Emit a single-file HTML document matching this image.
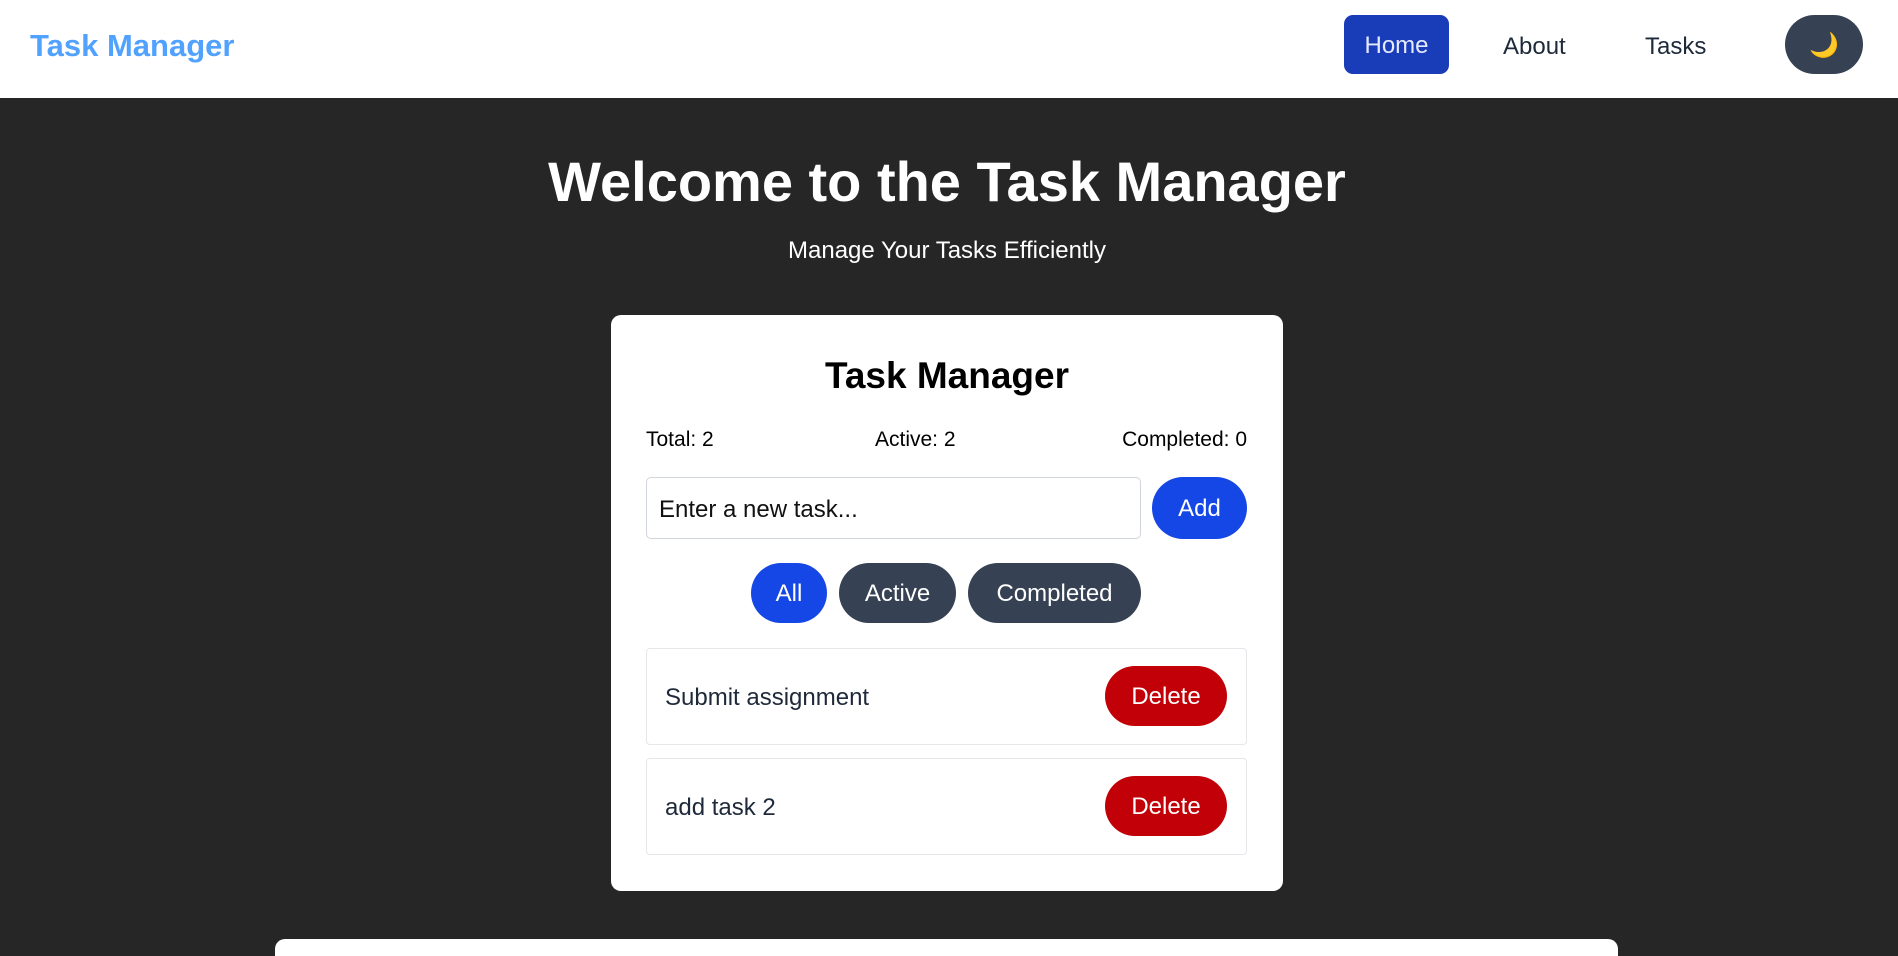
<!DOCTYPE html>
<html><head><meta charset="utf-8"><style>
*{box-sizing:border-box;margin:0;padding:0}
html,body{width:1898px;height:956px;overflow:hidden}
body{background:#262626;font-family:"Liberation Sans","DejaVu Sans",sans-serif;position:relative}
.a{position:absolute}
.nav{left:0;top:0;width:1898px;height:98px;background:#fff}
.btn{display:flex;align-items:center;justify-content:center;color:#fff;font-size:24px;padding-top:2px}
.c{text-align:center}
</style></head><body>
<div class="a nav"></div>
<div class="a" style="left:30px;top:28px;font-size:31px;font-weight:bold;color:#51a2ff">Task Manager</div>
<div class="a btn" style="left:1344px;top:15px;width:105px;height:59px;background:#193cb8;border-radius:9px;color:#e5eaff">Home</div>
<div class="a" style="left:1503px;top:33px;font-size:24px;color:#1e2939">About</div>
<div class="a" style="left:1645px;top:33px;font-size:24px;color:#1e2939">Tasks</div>
<div class="a btn" style="left:1785px;top:15px;width:78px;height:59px;background:#364153;border-radius:30px;font-size:24px;color:#f5c542">&#x1F319;</div>
<div class="a c" style="left:0;width:1894px;top:149px;font-size:56px;font-weight:bold;color:#fff">Welcome to the Task Manager</div>
<div class="a c" style="left:0;width:1894px;top:237px;font-size:24px;color:#fff">Manage Your Tasks Efficiently</div>
<div class="a" style="left:611px;top:315px;width:672px;height:576px;background:#fff;border-radius:10px"></div>
<div class="a c" style="left:611px;width:672px;top:355px;font-size:37px;font-weight:bold;color:#000">Task Manager</div>
<div class="a" style="left:646px;top:428px;font-size:21px;color:#000">Total: 2</div>
<div class="a" style="left:875px;top:428px;font-size:21px;color:#000">Active: 2</div>
<div class="a" style="right:651px;top:428px;font-size:21px;color:#000">Completed: 0</div>
<div class="a" style="left:646px;top:477px;width:495px;height:62px;border:1.5px solid #d1d5dc;border-radius:5px;font-size:24px;color:#111;padding:18px 12px 0">Enter a new task...</div>
<div class="a btn" style="left:1152px;top:477px;width:95px;height:62px;background:#1447e6;border-radius:31px">Add</div>
<div class="a btn" style="left:751px;top:563px;width:76px;height:60px;background:#1447e6;border-radius:30px">All</div>
<div class="a btn" style="left:839px;top:563px;width:117px;height:60px;background:#364153;border-radius:30px">Active</div>
<div class="a btn" style="left:968px;top:563px;width:173px;height:60px;background:#364153;border-radius:30px">Completed</div>
<div class="a" style="left:646px;top:648px;width:601px;height:97px;border:1.5px solid #e5e7eb;border-radius:4px"></div>
<div class="a" style="left:665px;top:684px;font-size:24px;color:#1e2939">Submit assignment</div>
<div class="a btn" style="left:1105px;top:666px;width:122px;height:60px;background:#c10007;border-radius:30px">Delete</div>
<div class="a" style="left:646px;top:758px;width:601px;height:97px;border:1.5px solid #e5e7eb;border-radius:4px"></div>
<div class="a" style="left:665px;top:794px;font-size:24px;color:#1e2939">add task 2</div>
<div class="a btn" style="left:1105px;top:776px;width:122px;height:60px;background:#c10007;border-radius:30px">Delete</div>
<div class="a" style="left:275px;top:939px;width:1343px;height:17px;background:#fff;border-radius:10px 10px 0 0"></div>
</body></html>
